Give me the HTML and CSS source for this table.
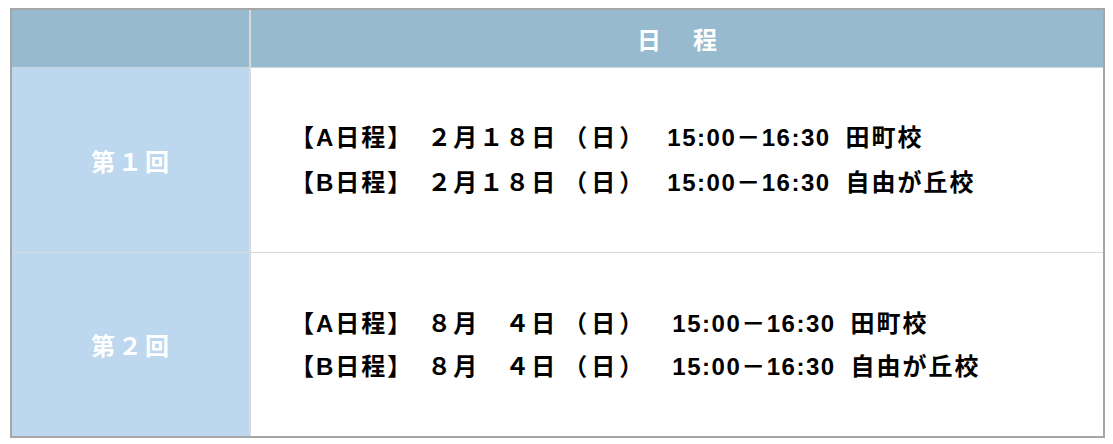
FILE: index.html
```html
<!DOCTYPE html>
<html lang="ja">
<head>
<meta charset="utf-8">
<title>日程</title>
<link rel="stylesheet" href="styles.css">
</head>
<body>
<div class="schedule">
  <div class="cell head-side"></div>
  <div class="cell head-main">日　程</div>

  <div class="cell side">第１回</div>
  <div class="cell main">
    <p class="line"><span class="lbl">【A日程】</span>　<span class="date">２月１８日</span><span class="dow">（日）</span><span class="time">15:00－16:30</span><span class="place">田町校</span></p>
    <p class="line"><span class="lbl">【B日程】</span>　<span class="date">２月１８日</span><span class="dow">（日）</span><span class="time">15:00－16:30</span><span class="place">自由が丘校</span></p>
  </div>

  <div class="cell side last">第２回</div>
  <div class="cell main last">
    <p class="line"><span class="lbl">【A日程】</span>　<span class="date">８月　４日</span><span class="dow">（日）</span><span class="time">15:00－16:30</span><span class="place">田町校</span></p>
    <p class="line"><span class="lbl">【B日程】</span>　<span class="date">８月　４日</span><span class="dow">（日）</span><span class="time">15:00－16:30</span><span class="place">自由が丘校</span></p>
  </div>
</div>
</body>
</html>
```
FILE: styles.css
```css
html, body {
  margin: 0;
  padding: 0;
  background: #ffffff;
}

body {
  font-family: "Liberation Sans", "Noto Sans CJK JP", sans-serif;
}

.schedule {
  display: grid;
  grid-template-columns: 237px 1fr;
  grid-template-rows: 58px 185px 183px;
  width: 1095px;
  box-sizing: border-box;
  margin: 8px 0 0 10px;
  border: 2px solid #a6a6a6;
}

.cell {
  display: flex;
  align-items: center;
  border-bottom: 1px solid #d9d9d9;
  font-weight: bold;
  font-size: 24px;
}

.cell.last {
  border-bottom: none;
}

.head-side,
.head-main {
  background: #98bacf;
  border-bottom-color: #c9d7e1;
}

.head-main {
  border-left: 2px solid #d9d9d9;
  justify-content: center;
  color: #ffffff;
  letter-spacing: 4px;
  padding-left: 4px;
}

.side {
  background: #bdd7ee;
  color: #ffffff;
  justify-content: center;
  letter-spacing: 3px;
  padding-left: 2px;
}

.main {
  border-left: 2px solid #d9d9d9;
  flex-direction: column;
  align-items: flex-start;
  justify-content: center;
  padding-left: 39px;
  color: #000000;
}

.line {
  margin: 0;
  line-height: 45px;
  white-space: pre;
  letter-spacing: 2px;
}

.main.last .line {
  line-height: 43px;
}

.dow {
  margin-left: 6px;
  letter-spacing: 4px;
}

.time {
  margin-left: 20px;
  letter-spacing: 1.5px;
}

.main.last .time {
  margin-left: 25px;
}

.place {
  margin-left: 15px;
}
```
